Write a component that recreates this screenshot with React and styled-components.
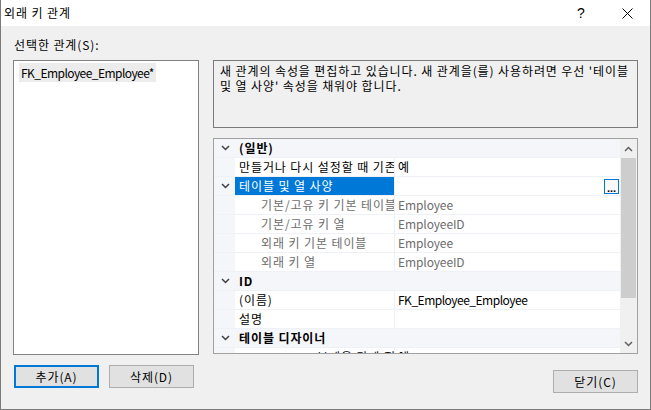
import React from 'react'
import styled, { createGlobalStyle } from 'styled-components'

const Global = createGlobalStyle`
  html, body { margin: 0; padding: 0; background: #f0f0f0; }
  body {
    font-family: "Noto Sans CJK KR", "Noto Sans", sans-serif;
    font-size: 12px;
    letter-spacing: 0.9px;
    color: #000;
  }
`

const rows = [
  { kind: 'cat', name: '(일반)' },
  { kind: 'prop', name: '만들거나 다시 설정할 때 기존 데이터 검사', value: '예' },
  { kind: 'sel', name: '테이블 및 열 사양', value: '', button: true },
  { kind: 'sub', name: '기본/고유 키 기본 테이블', value: 'Employee' },
  { kind: 'sub', name: '기본/고유 키 열', value: 'EmployeeID' },
  { kind: 'sub', name: '외래 키 기본 테이블', value: 'Employee' },
  { kind: 'sub', name: '외래 키 열', value: 'EmployeeID' },
  { kind: 'cat', name: 'ID' },
  { kind: 'prop', name: '(이름)', value: 'FK_Employee_Employee', tight: true },
  { kind: 'prop', name: '설명', value: '' },
  { kind: 'cat', name: '테이블 디자이너' },
  { kind: 'deep', name: '복제용 강제 적용', value: '예' },
]

const Window = styled.div`
  width: 651px;
  height: 410px;
  box-sizing: border-box;
  border: 1px solid #7a7a7a;
  border-top: none;
  background: #f0f0f0;
  display: flex;
  flex-direction: column;
`

const TitleBar = styled.div`
  height: 26px;
  background: #fff;
  display: flex;
  align-items: center;
  padding-left: 3px;
`

const Title = styled.div`
  flex: 1;
  font-size: 12px;
  line-height: 16px;
`

const CaptionButton = styled.div`
  width: 46px;
  height: 26px;
  display: flex;
  align-items: center;
  justify-content: center;
  font-family: "Liberation Sans", sans-serif;
  font-size: 14px;
  letter-spacing: 0;
`

const Body = styled.div`
  flex: 1;
  display: flex;
  gap: 14px;
  padding: 11px 12px 0 12px;
`

const LeftCol = styled.div`
  width: 186px;
  display: flex;
  flex-direction: column;
`

const Label = styled.div`
  height: 16px;
  line-height: 16px;
  margin-bottom: 7px;
  padding-left: 1px;
`

const ListBox = styled.div`
  height: 295px;
  box-sizing: border-box;
  border: 1px solid #828282;
  background: #fff;
  padding: 1px 5px;
`

const ListItem = styled.div`
  display: inline-block;
  background: #ececec;
  padding: 0 2px;
  height: 19px;
  line-height: 19px;
  margin-top: 1px;
  letter-spacing: -0.55px;
`

const ButtonRow = styled.div`
  display: flex;
  gap: 10px;
  margin-top: 10px;
  padding-left: 1px;
`

const Button = styled.div`
  width: 85px;
  height: 23px;
  box-sizing: border-box;
  border: ${p => (p.$default ? '2px solid #0078d7' : '1px solid #adadad')};
  background: #e1e1e1;
  display: flex;
  align-items: center;
  justify-content: center;
  line-height: 16px;
`

const RightCol = styled.div`
  width: 425px;
  display: flex;
  flex-direction: column;
  padding-top: 23px;
`

const Description = styled.div`
  height: 68px;
  box-sizing: border-box;
  border: 1px solid #7a7a7a;
  padding: 2px 6px;
  line-height: 15px;
  white-space: nowrap;
  overflow: hidden;
`

const Grid = styled.div`
  margin-top: 10px;
  height: 216px;
  box-sizing: border-box;
  border: 1px solid #a0a0a0;
  background: #fff;
  display: flex;
  overflow: hidden;
`

const Rows = styled.div`
  flex: 1;
  overflow: hidden;
`

const Row = styled.div`
  display: flex;
  height: 19px;
  box-sizing: border-box;
  border-bottom: 1px solid #eef1f6;
  background: ${p => (p.$cat ? '#f4f6fa' : '#fff')};
`

const Gutter = styled.div`
  width: 21px;
  flex: none;
  background: #f4f6fa;
  display: flex;
  align-items: center;
  justify-content: center;
  padding-left: 1px;
  box-sizing: border-box;
`

const NameCell = styled.div`
  width: 160px;
  flex: none;
  box-sizing: border-box;
  padding-left: ${p => p.$indent}px;
  line-height: 18px;
  white-space: nowrap;
  overflow: hidden;
  border-right: 1px solid #eef1f6;
  background: ${p => (p.$selected ? '#0078d7' : 'transparent')};
  color: ${p => (p.$selected ? '#fff' : p.$muted ? '#6d6d6d' : '#000')};
`

const CatName = styled.div`
  padding-left: 4px;
  line-height: 18px;
  font-weight: bold;
`

const ValueCell = styled.div`
  flex: 1;
  position: relative;
  padding-left: 3px;
  line-height: 18px;
  white-space: nowrap;
  overflow: hidden;
  letter-spacing: ${p => (p.$tight ? '-0.5px' : '-0.1px')};
  color: ${p => (p.$muted ? '#6d6d6d' : '#000')};
`

const EllipsisButton = styled.div`
  position: absolute;
  right: 1px;
  top: 2px;
  width: 15px;
  height: 15px;
  box-sizing: border-box;
  border: 1px solid #0078d7;
  background: #fafafa;
  font-size: 11px;
  line-height: 16px;
  text-align: center;
  letter-spacing: 0;
  font-weight: bold;
  font-family: "Liberation Sans", sans-serif;
`

const ScrollBar = styled.div`
  width: 17px;
  flex: none;
  background: #f0f0f0;
  display: flex;
  flex-direction: column;
  align-items: center;
`

const ScrollArrow = styled.div`
  height: 19px;
  width: 100%;
  display: flex;
  align-items: center;
  justify-content: center;
`

const ScrollTrack = styled.div`
  flex: 1;
  width: 100%;
  padding: 0 1px;
  box-sizing: border-box;
`

const Thumb = styled.div`
  height: 140px;
  background: #cdcdcd;
`

const Footer = styled.div`
  display: flex;
  justify-content: flex-end;
  margin-top: 16px;
`

const Chevron = ({ up, color = '#404040', w = 9 }) => (
  <svg width={w} height="6" viewBox="0 0 9 6">
    <path
      d={up ? 'M1 5 L4.5 1.5 L8 5' : 'M1 1 L4.5 4.5 L8 1'}
      fill="none"
      stroke={color}
      strokeWidth="1.5"
    />
  </svg>
)

const PropRow = ({ row }) => {
  if (row.kind === 'cat') {
    return (
      <Row $cat>
        <Gutter><Chevron /></Gutter>
        <CatName>{row.name}</CatName>
      </Row>
    )
  }
  const sub = row.kind === 'sub'
  return (
    <Row>
      <Gutter>{row.kind === 'sel' && <Chevron />}</Gutter>
      <NameCell
        $indent={sub ? 26 : row.kind === 'deep' ? 82 : 4}
        $selected={row.kind === 'sel'}
        $muted={sub}
      >
        {row.name}
      </NameCell>
      <ValueCell $muted={sub} $tight={row.tight}>
        {row.value}
        {row.button && <EllipsisButton>...</EllipsisButton>}
      </ValueCell>
    </Row>
  )
}

const App = () => {
  return (
    <Window>
      <Global />
      <TitleBar>
        <Title>외래 키 관계</Title>
        <CaptionButton>?</CaptionButton>
        <CaptionButton>
          <svg width="11" height="11" viewBox="0 0 11 11">
            <path d="M0.5 0.5 L10.5 10.5 M10.5 0.5 L0.5 10.5" stroke="#000" strokeWidth="1" />
          </svg>
        </CaptionButton>
      </TitleBar>
      <Body>
        <LeftCol>
          <Label>선택한 관계(S):</Label>
          <ListBox>
            <ListItem>FK_Employee_Employee*</ListItem>
          </ListBox>
          <ButtonRow>
            <Button $default>추가(A)</Button>
            <Button>삭제(D)</Button>
          </ButtonRow>
        </LeftCol>
        <RightCol>
          <Description>
            새 관계의 속성을 편집하고 있습니다. 새 관계을(를) 사용하려면 우선 '테이블
            <br />
            및 열 사양' 속성을 채워야 합니다.
          </Description>
          <Grid>
            <Rows>
              {rows.map((r, i) => (
                <PropRow key={i} row={r} />
              ))}
            </Rows>
            <ScrollBar>
              <ScrollArrow><Chevron up color="#606060" /></ScrollArrow>
              <ScrollTrack><Thumb /></ScrollTrack>
              <ScrollArrow><Chevron color="#606060" /></ScrollArrow>
            </ScrollBar>
          </Grid>
          <Footer>
            <Button>닫기(C)</Button>
          </Footer>
        </RightCol>
      </Body>
    </Window>
  )
}

export default App
